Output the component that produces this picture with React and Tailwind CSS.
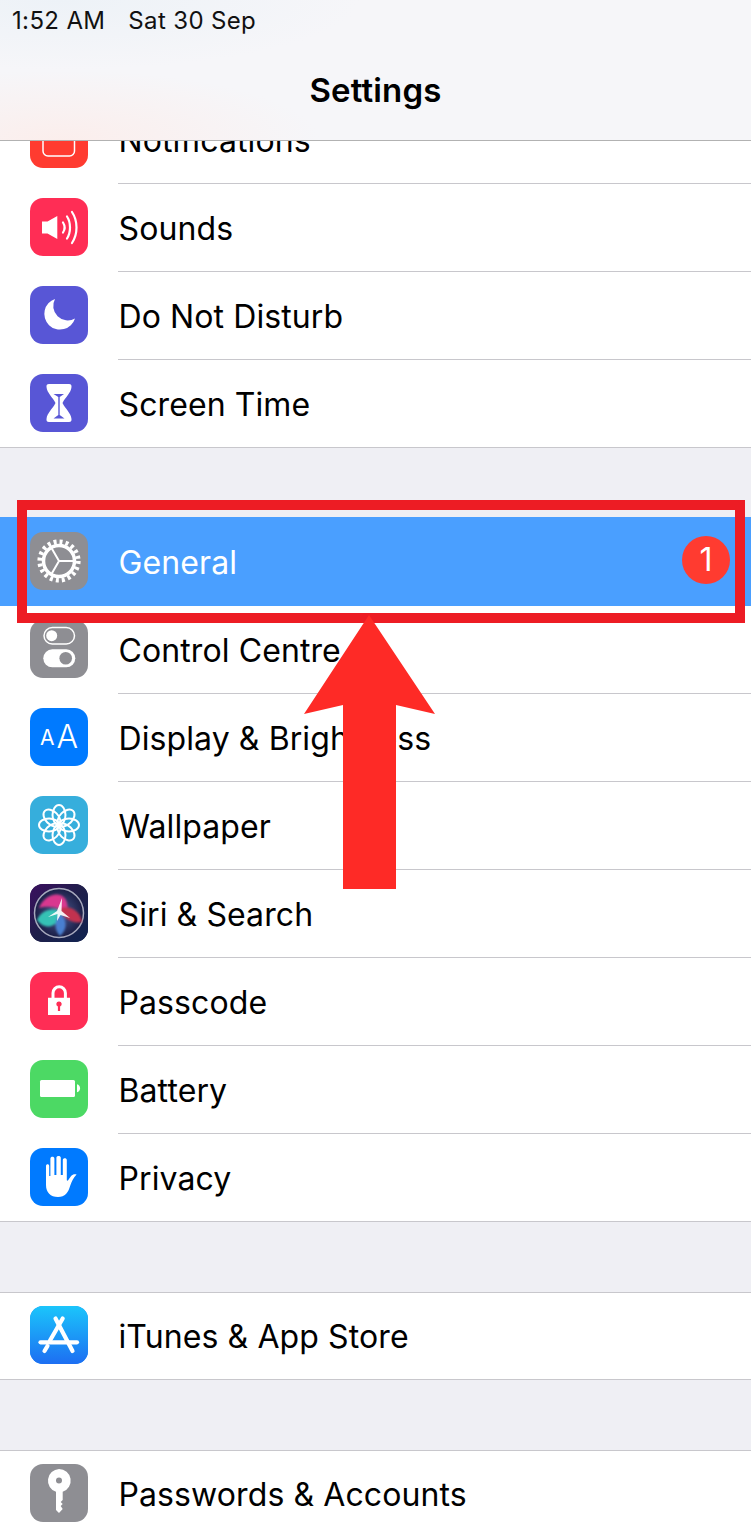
import React from "react";

const Bell = () => (
  <svg viewBox="0 0 58 58" className="w-full h-full">
    <rect x="13" y="15" width="31.5" height="31" rx="5" fill="none" stroke="#fff" strokeWidth="1.5" />
  </svg>
);

const Sounds = () => (
  <svg viewBox="0 0 58 58" className="w-full h-full">
    <path d="M12 23.5h5.5L27.3 18v23l-9.8-5.5H12z" fill="#fff" />
    <g fill="none" stroke="#fff" strokeWidth="2.2" strokeLinecap="round">
      <path d="M33 24.5c2 3 2 7 0 10" />
      <path d="M37 18.5c4 6 4 16 0 22" />
      <path d="M42 14c6 9 6 22 0 31" />
    </g>
  </svg>
);

const Moon = () => (
  <svg viewBox="0 0 58 58" className="w-full h-full">
    <path d="M25 13A15.7 15.7 0 1 0 45 32.5A14.5 14.5 0 0 1 25 13Z" fill="#fff" />
  </svg>
);

const Hourglass = () => (
  <svg viewBox="0 0 58 58" className="w-full h-full">
    <path
      d="M19 10h20c2 0 2.7 1 2.5 3-.5 6-6 10-9 16 3 6 8.500 10 9 16 .2 2-.5 3-2.500 3H19c-2 0-2.700-1-2.500-3 .5-6 6-10 9-16-3-6-8.500-10-9-16-.2-2 .5-3 2.500-3z"
      fill="#fff"
    />
    <path d="M23.500 20h10.500l-4.300 3v18l4.800 3.500H23.500l4.800-3.500V23z" fill="#5856d6" />
  </svg>
);

const Gear = () => (
  <svg viewBox="0 0 58 58" className="w-full h-full">
    <circle cx="29" cy="29" r="19.300" fill="none" stroke="#fff" strokeWidth="4.600" strokeDasharray="3 3.063" />
    <circle cx="29" cy="29" r="15.500" fill="none" stroke="#fff" strokeWidth="3.500" />
    <path d="M29 29H44M29 29L21.500 16M29 29L21.500 42" stroke="#fff" strokeWidth="2" />
  </svg>
);

const Toggles = () => (
  <svg viewBox="0 0 58 58" className="w-full h-full">
    <rect x="14" y="7.500" width="30.500" height="16.500" rx="8.250" fill="none" stroke="#fff" strokeWidth="1.500" />
    <circle cx="21.700" cy="15.700" r="5.500" fill="#fff" />
    <rect x="13.300" y="29.300" width="32" height="18" rx="9" fill="#fff" />
    <circle cx="35.700" cy="38.300" r="6.300" fill="#8e8e93" />
  </svg>
);

const TextSize = () => (
  <svg viewBox="0 0 58 58" className="w-full h-full">
    <text x="10" y="37" fill="#fff" fontSize="21" fontFamily="Inter, sans-serif">A</text>
    <text x="26.500" y="40" fill="#fff" fontSize="32" fontWeight="300" fontFamily="Inter, sans-serif">A</text>
  </svg>
);

const Flower = () => (
  <svg viewBox="0 0 58 58" className="w-full h-full">
    {[0, 45, 90, 135, 180, 225, 270, 315].map((deg) => (
      <ellipse
        key={deg}
        cx="29"
        cy="19"
        rx="6.500"
        ry="10"
        fill="none"
        stroke="#fff"
        strokeWidth="2"
        transform={`rotate(${deg} 29 29)`}
      />
    ))}
    <circle cx="29" cy="29" r="3.200" fill="#fff" />
  </svg>
);

const Siri = () => (
  <svg viewBox="0 0 58 58" className="w-full h-full">
    <defs>
      <linearGradient id="siriBg" x1="0" y1="0" x2="1" y2="1">
        <stop offset="0" stopColor="#3b0f5f" />
        <stop offset="0.5" stopColor="#1f1f4a" />
        <stop offset="1" stopColor="#0f2350" />
      </linearGradient>
      <radialGradient id="siriDisc" cx="0.5" cy="0.5" r="0.5">
        <stop offset="0" stopColor="#4f5f96" />
        <stop offset="1" stopColor="#1a1d45" />
      </radialGradient>
      <filter id="siriBlur">
        <feGaussianBlur stdDeviation="1.200" />
      </filter>
    </defs>
    <rect width="58" height="58" fill="url(#siriBg)" />
    <circle cx="29" cy="29" r="24.500" fill="url(#siriDisc)" stroke="#a7a9bd" strokeWidth="1.500" />
    <g filter="url(#siriBlur)">
      <path d="M9 24C16 6 42 4 37 30C30 24 20 21 9 24Z" fill="#d9388f" />
      <path d="M7 36C11 26 24 22 33 29C28 42 16 48 7 36Z" fill="#35c2b5" />
      <path d="M29 25C38 20 50 26 52 38C43 40 34 35 29 25Z" fill="#c2324f" />
      <path d="M30 30C37 35 38 45 30 52C24 46 24 36 30 30Z" fill="#4a7fd0" />
    </g>
    <path d="M32 14L31.500 27L40 34L30.500 31L27 37L27.500 30L18 33L27 27Z" fill="#fff" opacity="0.9" />
  </svg>
);

const Lock = () => (
  <svg viewBox="0 0 58 58" className="w-full h-full">
    <path d="M23 27v-6a6.200 6.200 0 0 1 12.400 0v6" fill="none" stroke="#fff" strokeWidth="3" />
    <path fillRule="evenodd" fill="#fff" d="M18 25.700h22V43H18zM29 29.500a2.600 2.600 0 0 0-1.100 5V39h2.200v-4.500a2.600 2.600 0 0 0-1.100-5z" />
  </svg>
);

const Battery = () => (
  <svg viewBox="0 0 58 58" className="w-full h-full">
    <rect x="10" y="20" width="35" height="17" rx="1.500" fill="#fff" />
    <path d="M47 24.300c2 .4 3 2 3 4s-1 3.600-3 4z" fill="#fff" />
  </svg>
);

const Hand = () => (
  <svg viewBox="0 0 58 58" className="w-full h-full">
    <path
      fill="#fff"
      d="M16 18c0-2.400 3.200-2.400 3.200 0v10h1.200V10.700c0-2.500 4-2.500 4 0V27h2V9.800c0-2.500 4.400-2.500 4.400 0V27h2V12c0-2.500 4-2.500 4 0v20c0 .8.800 1 1.300.3l3-4.300c1.600-1.800 3.500-2 5.500-1.500-3.200 3-4.900 7-6.500 11.500C38.300 44.500 35 49 28 49c-7.500 0-12-4.500-12-12z"
    />
  </svg>
);

const AppStore = () => (
  <svg viewBox="0 0 58 58" className="w-full h-full">
    <defs>
      <linearGradient id="storeBg" x1="0" y1="0" x2="0" y2="1">
        <stop offset="0" stopColor="#1bc5fb" />
        <stop offset="1" stopColor="#1d6ef2" />
      </linearGradient>
    </defs>
    <rect width="58" height="58" fill="url(#storeBg)" />
    <g stroke="#fff" strokeWidth="4.200" strokeLinecap="round" fill="none">
      <path d="M10.500 36.300H47" />
      <path d="M32.700 12.500L20 34.500" />
      <path d="M17.500 40L14.500 45" />
      <path d="M25.500 12.500L42.500 45" />
    </g>
  </svg>
);

const Key = () => (
  <svg viewBox="0 0 58 58" className="w-full h-full">
    <path
      fillRule="evenodd"
      fill="#fff"
      d="M29 5a11.700 11.700 0 0 1 3.700 22.800V36l-2 2 2 2-2 2 2 3-3.700 4-3-3V27.800A11.700 11.700 0 0 1 29 5zM29 13.500a3 3 0 1 0 0 6 3 3 0 0 0 0-6z"
    />
  </svg>
);

const Row = ({ icon, color, label, last, selected, badge }) => (
  <div className={`flex h-[88px] items-start pl-[30px] ${selected ? "bg-[#4a9fff]" : ""}`}>
    <div className={`mt-[14px] h-[58px] w-[58px] shrink-0 overflow-hidden rounded-[13px] ${color}`}>{icon}</div>
    <div
      className={`ml-[30px] flex h-full flex-1 items-center border-b ${
        last ? "border-transparent" : "border-[#c8c7cc]"
      }`}
    >
      <span className={`pl-[0.5px] pt-[2px] text-[32px] tracking-[0.1px] ${selected ? "text-white" : "text-black"}`}>{label}</span>
      {badge && (
        <span className="mb-[4px] ml-auto mr-[21px] flex h-[48px] w-[48px] items-center justify-center rounded-full bg-[#ff3b30] text-[32px] text-white">
          {badge}
        </span>
      )}
    </div>
  </div>
);

export default function App() {
  return (
    <div className="relative h-[1536px] w-[751px] overflow-hidden bg-[#efeff4] font-['Inter',sans-serif]">
      <header className="relative z-10 h-[141px] border-b border-[#b2b2b2] bg-[radial-gradient(ellipse_260px_70px_at_60px_140px,#fbeeec,transparent),radial-gradient(ellipse_300px_70px_at_60px_0px,#edf2f7,transparent)] bg-[#f6f6f9]">
        <div className="flex h-[42px] items-center gap-[23px] pl-[12px] text-[24px] tracking-[0.35px] text-[#111]">
          <span>1:52 AM</span>
          <span>Sat 30 Sep</span>
        </div>
        <h1 className="mt-[26px] text-center text-[33px] font-semibold leading-[44px] tracking-[0.15px] text-black">Settings</h1>
      </header>

      <div className="-mt-[45px]">
        <section className="border-b border-[#c8c7cc] bg-white">
          <Row icon={<Bell />} color="bg-[#ff3b30]" label="Notifications" />
          <Row icon={<Sounds />} color="bg-[#ff2d55]" label="Sounds" />
          <Row icon={<Moon />} color="bg-[#5856d6]" label="Do Not Disturb" />
          <div className="-mb-px">
            <Row icon={<Hourglass />} color="bg-[#5856d6]" label="Screen Time" last />
          </div>
        </section>

        <div className="h-[69px]" />

        <section className="border-b border-[#c8c7cc] bg-white">
          <div className="bg-[#4a9fff] pt-px">
            <Row icon={<Gear />} color="bg-[#8e8e93]" label="General" last selected badge="1" />
          </div>
          <Row icon={<Toggles />} color="bg-[#8e8e93]" label="Control Centre" />
          <Row icon={<TextSize />} color="bg-[#007aff]" label="Display & Brightness" />
          <Row icon={<Flower />} color="bg-[#36aedc]" label="Wallpaper" />
          <Row icon={<Siri />} color="bg-[#1f1f4a]" label="Siri & Search" />
          <Row icon={<Lock />} color="bg-[#ff2d55]" label="Passcode" />
          <Row icon={<Battery />} color="bg-[#4cd964]" label="Battery" />
          <div className="-mb-px">
            <Row icon={<Hand />} color="bg-[#007aff]" label="Privacy" last />
          </div>
        </section>

        <div className="h-[70px]" />

        <section className="border-b border-[#c8c7cc] bg-white shadow-[inset_0_1px_0_#c8c7cc]">
          <div className="-mb-px">
            <Row icon={<AppStore />} color="bg-[#1d8ef6]" label="iTunes & App Store" last />
          </div>
        </section>

        <div className="h-[70px]" />

        <section className="bg-white shadow-[inset_0_1px_0_#c8c7cc]">
          <Row icon={<Key />} color="bg-[#8e8e93]" label="Passwords & Accounts" />
        </section>
      </div>

      {/* annotation drawn on top of the screenshot */}
      <div className="absolute left-[17px] top-[500px] h-[123px] w-[728px] border-[10px] border-[#ed1c24]" />
      <svg className="absolute left-[300px] top-[610px]" width="140" height="285" viewBox="300 610 140 285">
        <path d="M369 615L435 714L396 705V889H343V705L304 714Z" fill="#fe2a26" />
      </svg>
    </div>
  );
}
